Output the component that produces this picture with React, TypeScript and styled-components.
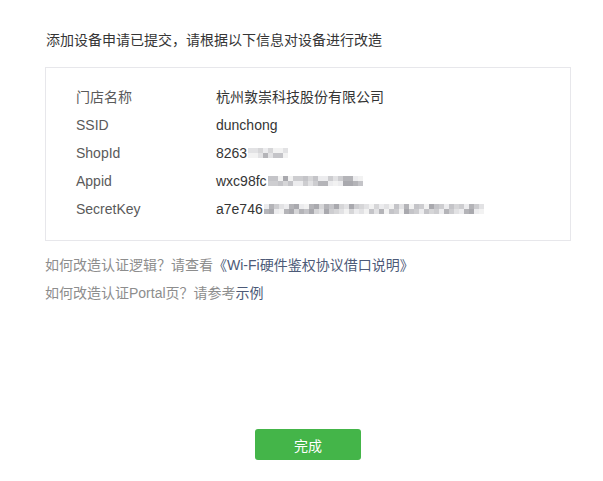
import React from "react";
import styled, { createGlobalStyle } from "styled-components";

const GlobalStyle = createGlobalStyle`
  html, body {
    margin: 0;
    padding: 0;
    background: #fff;
  }
  body {
    font-family: "Liberation Sans", "Noto Sans CJK SC", sans-serif;
    font-size: 14px;
    color: #353535;
  }
`;

const Page = styled.div`
  width: 603px;
  height: 481px;
  box-sizing: border-box;
  padding: 30px 32px 0 45px;
  display: flex;
  flex-direction: column;
`;

const Notice = styled.div`
  line-height: 20px;
  padding-left: 1px;
  color: #353535;
`;

const InfoBox = styled.div`
  margin-top: 17px;
  border: 1px solid #e7e7eb;
  padding: 15px 30px 17px;
`;

const InfoRow = styled.div`
  display: flex;
  align-items: center;
  line-height: 28px;
  height: 28px;
`;

const Label = styled.span`
  width: 140px;
  color: #5a5a5a;
`;

const Value = styled.span`
  color: #353535;
  display: flex;
  align-items: center;
`;

const MosaicWrap = styled.span`
  display: inline-flex;
  flex-direction: column;
  margin-left: 1px;
`;

const MosaicLine = styled.span`
  display: flex;
`;

const Cell = styled.span`
  width: 5px;
  height: 5px;
`;

const Help = styled.div`
  margin-top: 10px;
  display: flex;
  flex-direction: column;
`;

const HelpLine = styled.div`
  line-height: 28px;
  color: #8d8d8d;
`;

const Link = styled.a`
  color: #4d5a78;
  text-decoration: none;
  cursor: pointer;
`;

const Footer = styled.div`
  margin-top: 122px;
  display: flex;
  justify-content: center;
`;

const DoneButton = styled.button`
  width: 106px;
  height: 31px;
  border: none;
  border-radius: 3px;
  background: #44b549;
  color: #fff;
  font-family: "Liberation Sans", "Noto Sans CJK SC", sans-serif;
  font-size: 14px;
  cursor: pointer;
`;

const shades = ["#ececee", "#d6d6d8", "#c4c4c8", "#b4b4b8", "#e2e2e4", "#cdcdd0", "#a9a9ae", "#f2f2f2"];

const Mosaic = ({ cols, seed }: { cols: number; seed: number }) => {
  const rows = [0, 1];
  return (
    <MosaicWrap>
      {rows.map((r) => (
        <MosaicLine key={r}>
          {Array.from({ length: cols }).map((_, i) => {
            const k = (i * 7 + r * 3 + seed * 5 + ((i * i + seed) % 5)) % shades.length;
            return <Cell key={i} style={{ background: shades[k] }} />;
          })}
        </MosaicLine>
      ))}
    </MosaicWrap>
  );
};

const rows = [
  { label: "门店名称", value: "杭州敦崇科技股份有限公司" },
  { label: "SSID", value: "dunchong" },
  { label: "ShopId", value: "8263", mosaic: 8 },
  { label: "Appid", value: "wxc98fc", mosaic: 19 },
  { label: "SecretKey", value: "a7e746", mosaic: 44 },
];

export default function App() {
  return (
    <>
      <GlobalStyle />
      <Page>
        <Notice>添加设备申请已提交，请根据以下信息对设备进行改造</Notice>
        <InfoBox>
          {rows.map((row, i) => (
            <InfoRow key={row.label}>
              <Label>{row.label}</Label>
              <Value>
                {row.value}
                {row.mosaic ? <Mosaic cols={row.mosaic} seed={i} /> : null}
              </Value>
            </InfoRow>
          ))}
        </InfoBox>
        <Help>
          <HelpLine>
            如何改造认证逻辑？请查看<Link>《Wi-Fi硬件鉴权协议借口说明》</Link>
          </HelpLine>
          <HelpLine>
            如何改造认证Portal页？请参考<Link>示例</Link>
          </HelpLine>
        </Help>
        <Footer>
          <DoneButton>完成</DoneButton>
        </Footer>
      </Page>
    </>
  );
}
